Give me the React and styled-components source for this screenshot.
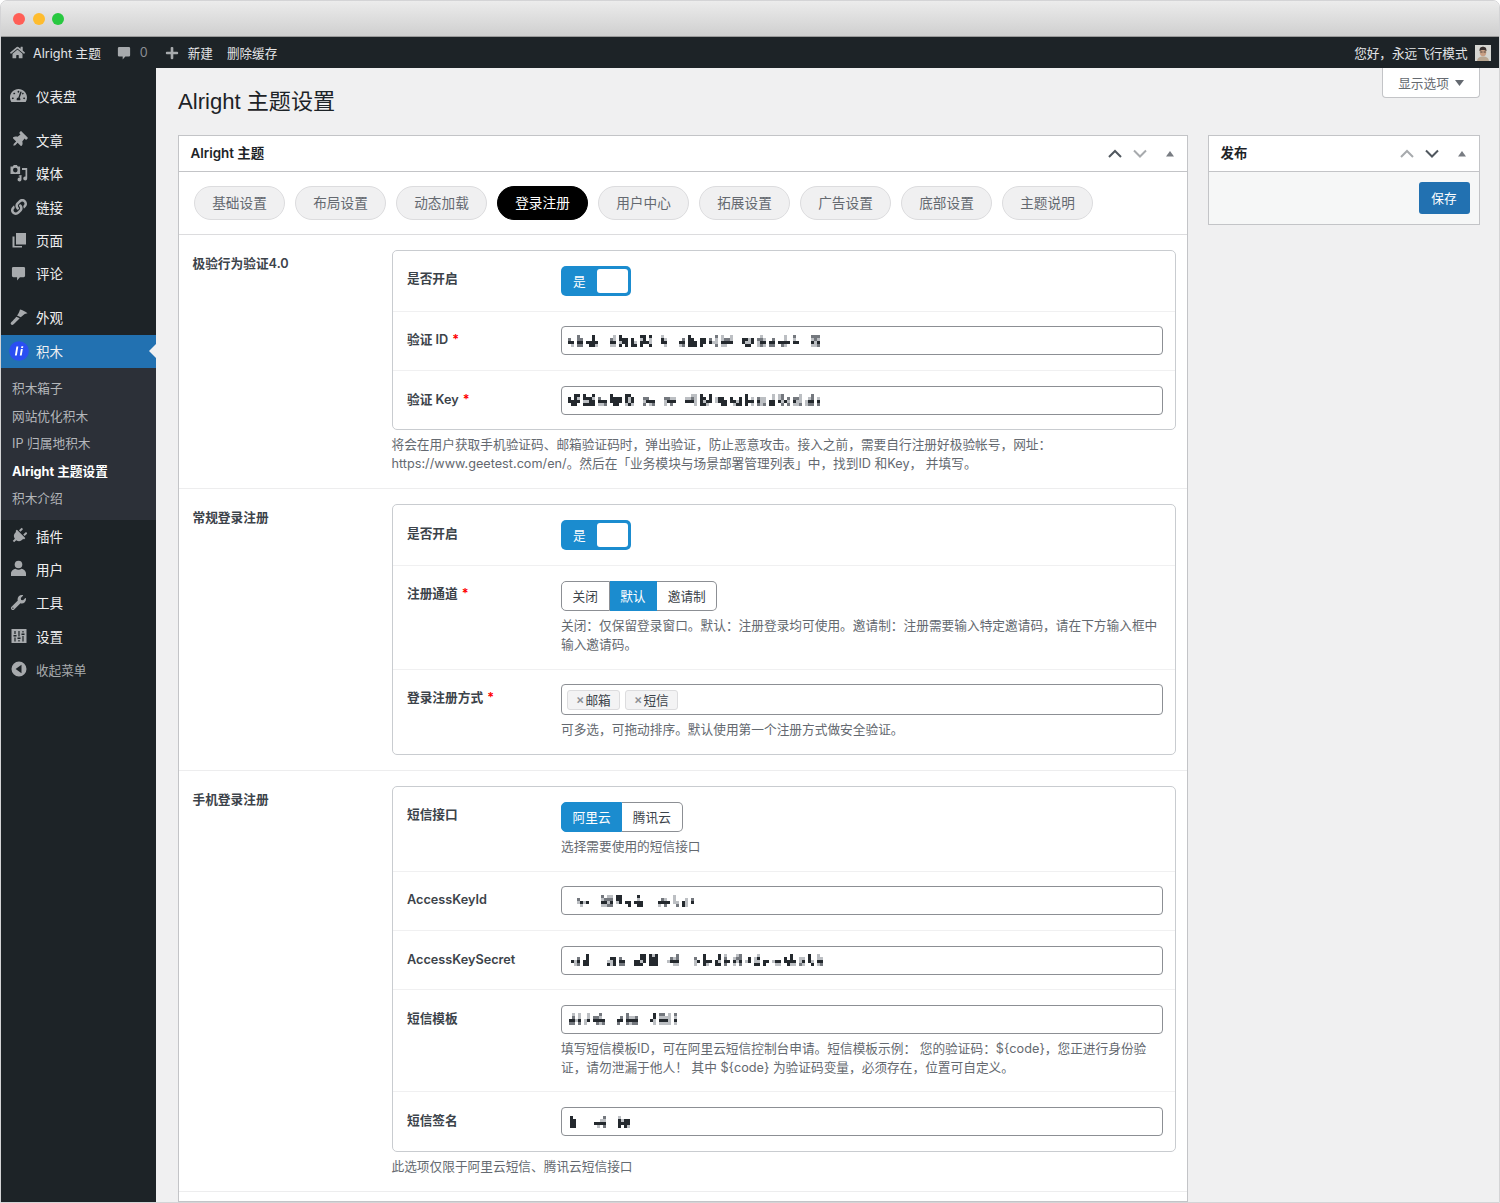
import React from "react";
import styled, { createGlobalStyle } from "styled-components";
import { FaHome, FaPlus, FaTachometerAlt, FaThumbtack, FaLink, FaPlug, FaWrench } from "react-icons/fa";

const FONT = `Inter, "Noto Sans CJK SC", sans-serif`;
const TITLE_FONT = `"Liberation Sans", "Noto Sans CJK SC", sans-serif`;

const TXT = {
  hello: "您好\uFF0C永远飞行模式",
  geetest: "将会在用户获取手机验证码、邮箱验证码时\uFF0C弹出验证\uFF0C防止恶意攻击。接入之前\uFF0C需要自行注册好极验帐号\uFF0C网址\uFF1Ahttps://www.geetest.com/en/。然后在「业务模块与场景部署管理列表」中\uFF0C找到ID 和Key\uFF0C 并填写。",
  channel: "关闭\uFF1A仅保留登录窗口。默认\uFF1A注册登录均可使用。邀请制\uFF1A注册需要输入特定邀请码\uFF0C请在下方输入框中输入邀请码。",
  method: "可多选\uFF0C可拖动排序。默认使用第一个注册方式做安全验证。",
  tpl: "填写短信模板ID\uFF0C可在阿里云短信控制台申请。短信模板示例\uFF1A 您的验证码\uFF1A${code}\uFF0C您正进行身份验证\uFF0C请勿泄漏于他人\uFF01 其中 ${code} 为验证码变量\uFF0C必须存在\uFF0C位置可自定义。",
};

const Global = createGlobalStyle`
  html, body { margin: 0; padding: 0; background: #fff; }
  body { font-family: ${FONT}; font-size: 12.7px; color: #3c434a; }
  * { box-sizing: border-box; }
`;

const Win = styled.div`
  width: 1500px; height: 1203px; overflow: hidden; display: flex; flex-direction: column;
  border: 1px solid #d4d4d6; border-radius: 7px 7px 0 0; background: #f0f0f1;
`;
const TitleBar = styled.div`
  height: 36px; flex: none; display: flex; align-items: center; gap: 7.5px; padding-left: 12px;
  background: linear-gradient(#ececec, #cfcfcf); border-bottom: 1px solid #9a9a9a;
`;
const Light = styled.span`
  width: 12px; height: 12px; border-radius: 50%; background: ${p => p.$c};
`;
const AdminBar = styled.div`
  height: 31px; flex: none; background: #1d2327; color: #f0f0f1; display: flex; align-items: center;
  padding: 0 8.5px 0 9px; font-size: 12.6px;
`;
const BarItem = styled.span`
  display: flex; align-items: center; color: ${p => p.$dim ? "#8c8f94" : "#e4e5e7"}; margin-left: ${p => p.$ml || 0}px;
  svg { color: #a7aaad; flex: none; }
`;
const BarGap = styled.span`flex: 1;`;
const Avatar = styled.svg`width: 16px; height: 16px; margin-left: 7px; display: block;`;

const Body = styled.div`flex: 1; display: flex; min-height: 0;`;
const Side = styled.nav`
  width: 155px; flex: none; background: #1d2327; padding-top: 12px;
`;
const Item = styled.div`
  position: relative; height: 33.4px; display: flex; align-items: center; font-size: ${p => p.$small ? "12.6px" : "13.5px"};
  padding-bottom: 1.5px;
  color: ${p => p.$small ? "#a7aaad" : "#f0f0f1"}; background: ${p => p.$active ? "#2271b1" : "transparent"};
  margin-top: ${p => p.$sep ? 10.5 : 0}px;
`;
const IconSlot = styled.span`
  width: 35px; flex: none; display: flex; justify-content: center; align-items: center; color: #a7aaad;
`;
const ActiveArrow = styled.span`
  position: absolute; right: 0; top: 50%; margin-top: -7.5px; width: 0; height: 0;
  border: 7.5px solid transparent; border-right-color: #f0f0f1; border-left-width: 0;
`;
const Sub = styled.div`background: #2c3038; padding: 6px 0 8px;`;
const SubItem = styled.div`
  height: 27.5px; display: flex; align-items: center; padding-left: 11px; font-size: 12.7px;
  color: ${p => p.$on ? "#fff" : "#b4b7bb"}; font-weight: ${p => p.$on ? 700 : 400};
`;

const Content = styled.main`flex: 1; min-width: 0; display: flex; flex-direction: column; padding: 0 19px 0 22px;`;
const Head = styled.div`height: 67px; flex: none; display: flex; justify-content: space-between; align-items: flex-start;`;
const Title = styled.h1`margin: 20px 0 0; font: 400 22.1px/28px ${TITLE_FONT}; color: #1d2327;`;
const ScreenTab = styled.div`
  width: 98px; height: 30px; background: #fff; border: 1px solid #c3c4c7; border-top: 0; border-radius: 0 0 4px 4px;
  display: flex; align-items: center; justify-content: center; gap: 6px; color: #646970; font-size: 12.7px;
`;
const Columns = styled.div`flex: 1; min-height: 0; display: flex; gap: 20px;`;
const Panel = styled.section`
  background: #fff; border: 1px solid #c3c4c7; width: ${p => p.$w}px; flex: none;
  align-self: ${p => p.$short ? "flex-start" : "stretch"};
`;
const PanelHead = styled.div`
  height: 36px; display: flex; align-items: center; padding: 0 ${p => p.$r || 10}px 0 11.5px; border-bottom: 1px solid #c3c4c7;
`;
const PanelTitle = styled.h2`margin: 0 0 2px; flex: 1; font-size: 13.4px; font-weight: 600; color: #1d2327; line-height: 20px;`;
const Ctl = styled.svg`display: block; width: 14px; height: 14px; margin-left: ${p => p.$ml}px; flex: none;`;
const PubBody = styled.div`height: 52px; background: #f6f7f7; display: flex; justify-content: flex-end; padding: 10px 9.5px 0 0;`;
const Save = styled.button`
  width: 51px; height: 32px; border: 0; border-radius: 3px; background: #2271b1; color: #fff; font: 12.7px ${FONT}; padding: 0 0 2px;
`;
const Tabs = styled.div`display: flex; gap: 10px; height: 63px; padding: 14px 15px; border-bottom: 1px solid #dcdcde;`;
const Tab = styled.div`
  width: 91px; height: 33.5px; border-radius: 17px; display: flex; align-items: center; justify-content: center; font-size: 13.65px;
  padding-bottom: 2px;
  background: ${p => p.$on ? "#000" : "#f0f0f1"}; border: 1px solid ${p => p.$on ? "#000" : "#dcdcde"};
  color: ${p => p.$on ? "#fff" : "#646970"};
`;
const Sect = styled.div`
  display: grid; grid-template-columns: 199px 1fr; padding: 15px 11.5px 15px 13.5px; border-bottom: 1px solid #ededee;
`;
const SectLabel = styled.div`font-weight: 600; font-size: 12.7px; color: #3c434a; line-height: 19px; padding-top: 4px;`;
const Box = styled.div`border: 1px solid #c9ccd0; border-radius: 5px;`;
const Row = styled.div`
  display: grid; grid-template-columns: 154px 1fr; padding: 14.6px 11.5px 14.6px 14.5px;
  & + & { border-top: 1px solid #f0f0f1; }
`;
const Label = styled.div`font-weight: 600; font-size: 12.7px; color: #3c434a; line-height: 19px; padding-top: 3.9px;`;
const Req = styled.span`color: #f00; margin-left: 4px;`;
const Desc = styled.p`
  margin: ${p => p.$mt ?? 5}px 0 0; font-size: 12.7px; line-height: 19px; color: #646970;
`;
const Toggle = styled.div`
  width: 70px; height: 30.7px; border-radius: 5px; background: #1b8ccf; padding: 3.5px 3.5px 3.5px 12px; color: #fff;
  display: flex; justify-content: space-between; align-items: center; font-size: 12.7px;
`;
const Knob = styled.span`width: 30.5px; height: 23.7px; background: #fff; border-radius: 3px;`;
const Group = styled.div`display: flex; width: max-content; height: 30.7px;`;
const Seg = styled.div`
  display: flex; align-items: center; padding: 0 10.6px; font-size: 12.7px;
  border: 1px solid ${p => p.$on ? "#1b8ccf" : "#8c8f94"};
  background: ${p => p.$on ? "#1b8ccf" : "#fff"}; color: ${p => p.$on ? "#fff" : "#3c434a"};
  & + & { border-left: 0; }
  &:first-child { border-radius: 5px 0 0 5px; }
  &:last-child { border-radius: 0 5px 5px 0; }
`;
const Field = styled.div`
  height: 29px; border: 1px solid #8c8f94; border-radius: 4px; background: #fff; display: flex; align-items: center;
  padding-left: ${p => p.$pl}px;
`;
const Multi = styled.div`
  height: 31px; border: 1px solid #8c8f94; border-radius: 4px; background: #fff; display: flex; align-items: center; gap: 5px; padding-left: 5px;
`;
const Chip = styled.span`
  height: 20px; width: 53px; display: flex; align-items: center; padding-left: 8px; gap: 1px; background: #f3f3f4; border: 1px solid #dcdcde; border-radius: 3px;
  color: #3c434a; font-size: 12.7px;
`;
const ChipX = styled.span`color: #8c8f94; font-size: 12.5px; line-height: 1; font-weight: 600;`;
const MosaicSvg = styled.svg`display: block; filter: blur(0.6px);`;

/* censored values in the reference: clusters of square grey cells */
function Mosaic({ w, seed, gap = 0.12 }) {
  const cell = 3;
  const rows = 4;
  const cols = Math.floor(w / cell);
  let s = seed;
  const rnd = () => { s = (s * 16807) % 2147483647; return (s & 0xffff) / 0xffff; };
  const rects = [];
  let c = 0;
  while (c < cols) {
    if (rnd() < gap) { c += 2 + Math.floor(rnd() * 2); continue; }
    const len = 2 + Math.floor(rnd() * 3);
    const base = rnd();
    for (let i = 0; i < len && c + i < cols; i++) {
      const top = rnd() < 0.3 ? 0 : rnd() < 0.6 ? 1 : 2;
      for (let r = top; r < rows; r++) {
        if (r === 3 && rnd() < 0.3) continue;
        const v = rnd();
        const dark = r === 2 || base > 0.55;
        const fill = dark && v > 0.2 ? "#24292e" : v > 0.5 ? "#74787e" : "#bcbfc3";
        rects.push(<rect key={c + i + "-" + r} x={(c + i) * cell} y={r * cell} width={cell} height={cell} fill={fill} />);
      }
    }
    c += len + 1;
  }
  return <MosaicSvg width={w} height={rows * cell} viewBox={`0 0 ${w} ${rows * cell}`}>{rects}</MosaicSvg>;
}

const CommentIcon = ({ s = 15 }) => (
  <svg width={s} height={s} viewBox="0 0 16 16" fill="currentColor">
    <path d="M2.500 1h11A1.500 1.500 0 0 1 15 2.500v8a1.500 1.500 0 0 1-1.500 1.500H9.500L6.500 15.500V12h-4A1.500 1.500 0 0 1 1 10.500v-8A1.500 1.500 0 0 1 2.500 1z" />
  </svg>
);
const MediaIcon = () => (
  <svg width="18" height="18" viewBox="0 0 18 18" fill="currentColor">
    <path fillRule="evenodd" d="M.5 2.500h2.200L3.800 1h3l1.100 1.500h2.200V10H.5zM5.300 3.800a2.300 2.300 0 1 0 0 4.600 2.300 2.300 0 0 0 0-4.600z" />
    <path d="M12 4h5.200v10.500a2 2 0 1 1-1.700-2V6H12zM8.800 11.500l2.700-.5v4.500a2 2 0 1 1-1.600-2v-.9l-1.100.2z" />
  </svg>
);
const PageIcon = () => (
  <svg width="16" height="16" viewBox="0 0 16 16" fill="currentColor">
    <path d="M5 1h10v11.500H5z" />
    <path d="M1.500 4.500H3.500V14H11v1.500H1.500z" />
  </svg>
);
const BrushIcon = () => (
  <svg width="18" height="18" viewBox="0 0 18 18" fill="currentColor">
    <path d="M10 1.500c2.500.5 5.500 2 7.500 3.800l-2.800.6-4 3.400-3.700-1.700c1-1.300 2.500-3.800 3-6.100z" />
    <path d="M6.300 8.700l3.400 1.600C8 12 5.500 14.700 3.300 16.600c-.8.700-2.100.3-2.500-.6-.3-.8 0-1.300.6-1.900 1.500-1.500 3.400-3.600 4.900-5.400z" />
  </svg>
);
const UserIcon = () => (
  <svg width="17" height="17" viewBox="0 0 17 17" fill="currentColor">
    <circle cx="8.500" cy="4.500" r="3.800" />
    <path d="M1 16v-2.500C1 11 3.500 9 5.500 8.800c1.800 1.300 4.200 1.300 6 0C13.500 9 16 11 16 13.500V16z" />
  </svg>
);
const SettingsIcon = () => (
  <svg width="16" height="16" viewBox="0 0 16 16">
    <rect x="0.500" y="1" width="15" height="14" fill="#a7aaad" />
    <path d="M4 3v3M4 9.500V13.500M8 3v5.500M8 12v1.500M12 3v1.500M12 8v5.500" stroke="#1d2327" strokeWidth="1.200" fill="none" />
    <path d="M2.500 7.800h3M6.500 10.300h3M10.500 6.300h3" stroke="#1d2327" strokeWidth="1.500" fill="none" />
  </svg>
);
const CollapseIcon = () => (
  <svg width="16" height="16" viewBox="0 0 16 16" fill="currentColor">
    <path fillRule="evenodd" d="M8 .5a7.500 7.500 0 1 1 0 15 7.500 7.500 0 0 1 0-15zM10.500 3.800 4.600 8l5.900 4.200z" />
  </svg>
);
const BlockIcon = () => (
  <svg width="20" height="20" viewBox="0 0 20 20">
    <circle cx="10" cy="10" r="9.800" fill="#2a4ff2" />
    <path d="M7.400 5.600h1.900l-1.500 8.800H5.900zM11.900 8h1.900l-1.100 6.400h-1.900zM12.400 5.300h1.900l-.3 1.600h-1.900z" fill="#fff" />
  </svg>
);

const Up = ({ c, ml }) => <Ctl $ml={ml} viewBox="0 0 14 14"><path d="M1 10 7 4l6 6" fill="none" stroke={c} strokeWidth="2" /></Ctl>;
const Down = ({ c, ml }) => <Ctl $ml={ml} viewBox="0 0 14 14"><path d="M1 3.500 7 9.500l6-6" fill="none" stroke={c} strokeWidth="2" /></Ctl>;
const Caret = ({ ml }) => <Ctl $ml={ml} viewBox="0 0 14 14"><path d="M3 9.500 7 4l4 5.500z" fill="#787c82" /></Ctl>;

const menuTop = [
  { t: "仪表盘", i: <FaTachometerAlt size={17} /> },
  { t: "文章", i: <FaThumbtack size={16} style={{ transform: "rotate(45deg)" }} />, sep: true },
  { t: "媒体", i: <MediaIcon /> },
  { t: "链接", i: <FaLink size={16} /> },
  { t: "页面", i: <PageIcon /> },
  { t: "评论", i: <CommentIcon /> },
  { t: "外观", i: <BrushIcon />, sep: true },
];
const subs = ["积木箱子", "网站优化积木", "IP 归属地积木", "Alright 主题设置", "积木介绍"];
const menuBottom = [
  { t: "插件", i: <FaPlug size={16} style={{ transform: "rotate(45deg)" }} /> },
  { t: "用户", i: <UserIcon /> },
  { t: "工具", i: <FaWrench size={15} /> },
  { t: "设置", i: <SettingsIcon /> },
];
const tabs = ["基础设置", "布局设置", "动态加载", "登录注册", "用户中心", "拓展设置", "广告设置", "底部设置", "主题说明"];

const On = () => <Toggle>是<Knob /></Toggle>;

export default function App() {
  return (
    <>
      <Global />
      <Win>
        <TitleBar>
          <Light $c="#ff5f57" /><Light $c="#febc2e" /><Light $c="#28c840" />
        </TitleBar>
        <AdminBar>
          <BarItem><FaHome size={15} /></BarItem>
          <BarItem $ml={8}>Alright 主题</BarItem>
          <BarItem $ml={16}><CommentIcon s={14} /></BarItem>
          <BarItem $ml={9} $dim>0</BarItem>
          <BarItem $ml={17}><FaPlus size={14} /></BarItem>
          <BarItem $ml={9}>新建</BarItem>
          <BarItem $ml={14}>删除缓存</BarItem>
          <BarGap />
          <BarItem>{TXT.hello}</BarItem>
          <Avatar viewBox="0 0 16 16">
            <rect width="16" height="16" fill="#d5d6d2" />
            <path d="M2 16c.5-3.500 3-4.500 6-4.500s5.500 1 6 4.500z" fill="#b9a792" />
            <ellipse cx="8" cy="7" rx="3.300" ry="4.200" fill="#c89f84" />
            <path d="M4.500 6C4.500 2.500 6 1.800 8 1.800S11.500 2.500 11.500 6C10 4.500 6 4.500 4.500 6z" fill="#3a3230" />
            <path d="M5.300 7h2.200M8.600 7h2.200" stroke="#33302f" strokeWidth=".8" />
          </Avatar>
        </AdminBar>
        <Body>
          <Side>
            {menuTop.map(m => (
              <Item key={m.t} $sep={m.sep}><IconSlot>{m.i}</IconSlot>{m.t}</Item>
            ))}
            <Item $active><IconSlot><BlockIcon /></IconSlot>积木<ActiveArrow /></Item>
            <Sub>
              {subs.map((t, i) => <SubItem key={t} $on={i === 3}>{t}</SubItem>)}
            </Sub>
            {menuBottom.map(m => (
              <Item key={m.t}><IconSlot>{m.i}</IconSlot>{m.t}</Item>
            ))}
            <Item $small><IconSlot><CollapseIcon /></IconSlot>收起菜单</Item>
          </Side>
          <Content>
            <Head>
              <Title>Alright 主题设置</Title>
              <ScreenTab>显示选项
                <svg width="9" height="6" viewBox="0 0 9 6"><path d="M0 0h9L4.500 6z" fill="#646970" /></svg>
              </ScreenTab>
            </Head>
            <Columns>
              <Panel $w={1010}>
                <PanelHead $r={10}>
                  <PanelTitle>Alright 主题</PanelTitle>
                  <Up c="#50575e" /><Down c="#a7aaad" ml={11} /><Caret ml={16} />
                </PanelHead>
                <Tabs>
                  {tabs.map((t, i) => <Tab key={t} $on={i === 3}>{t}</Tab>)}
                </Tabs>

                <Sect>
                  <SectLabel>极验行为验证4.0</SectLabel>
                  <div>
                    <Box>
                      <Row><Label>是否开启</Label><On /></Row>
                      <Row><Label>验证 ID<Req>*</Req></Label><Field $pl={6}><Mosaic w={254} seed={1234} /></Field></Row>
                      <Row><Label>验证 Key<Req>*</Req></Label><Field $pl={6}><Mosaic w={252} seed={98765} /></Field></Row>
                    </Box>
                    <Desc $mt={4.8}>{TXT.geetest}</Desc>
                  </div>
                </Sect>

                <Sect>
                  <SectLabel>常规登录注册</SectLabel>
                  <Box>
                    <Row><Label>是否开启</Label><On /></Row>
                    <Row>
                      <Label>注册通道<Req>*</Req></Label>
                      <div>
                        <Group><Seg>关闭</Seg><Seg $on>默认</Seg><Seg>邀请制</Seg></Group>
                        <Desc>{TXT.channel}</Desc>
                      </div>
                    </Row>
                    <Row>
                      <Label>登录注册方式<Req>*</Req></Label>
                      <div>
                        <Multi>
                          <Chip><ChipX>×</ChipX>邮箱</Chip>
                          <Chip><ChipX>×</ChipX>短信</Chip>
                        </Multi>
                        <Desc $mt={5}>{TXT.method}</Desc>
                      </div>
                    </Row>
                  </Box>
                </Sect>

                <Sect>
                  <SectLabel>手机登录注册</SectLabel>
                  <div>
                    <Box>
                      <Row>
                        <Label>短信接口</Label>
                        <div>
                          <Group><Seg $on>阿里云</Seg><Seg>腾讯云</Seg></Group>
                          <Desc>选择需要使用的短信接口</Desc>
                        </div>
                      </Row>
                      <Row><Label>AccessKeyId</Label><Field $pl={15}><Mosaic w={118} seed={5511} gap={0.25} /></Field></Row>
                      <Row><Label>AccessKeySecret</Label><Field $pl={9}><Mosaic w={252} seed={7321} gap={0.3} /></Field></Row>
                      <Row>
                        <Label>短信模板</Label>
                        <div>
                          <Field $pl={7}><Mosaic w={108} seed={4242} gap={0.2} /></Field>
                          <Desc>{TXT.tpl}</Desc>
                        </div>
                      </Row>
                      <Row><Label>短信签名</Label><Field $pl={8}><Mosaic w={66} seed={3141} gap={0.4} /></Field></Row>
                    </Box>
                    <Desc $mt={5}>此选项仅限于阿里云短信、腾讯云短信接口</Desc>
                  </div>
                </Sect>
              </Panel>

              <Panel $w={272} $short>
                <PanelHead $r={10}>
                  <PanelTitle>发布</PanelTitle>
                  <Up c="#a7aaad" /><Down c="#50575e" ml={11} /><Caret ml={16} />
                </PanelHead>
                <PubBody><Save>保存</Save></PubBody>
              </Panel>
            </Columns>
          </Content>
        </Body>
      </Win>
    </>
  );
}
